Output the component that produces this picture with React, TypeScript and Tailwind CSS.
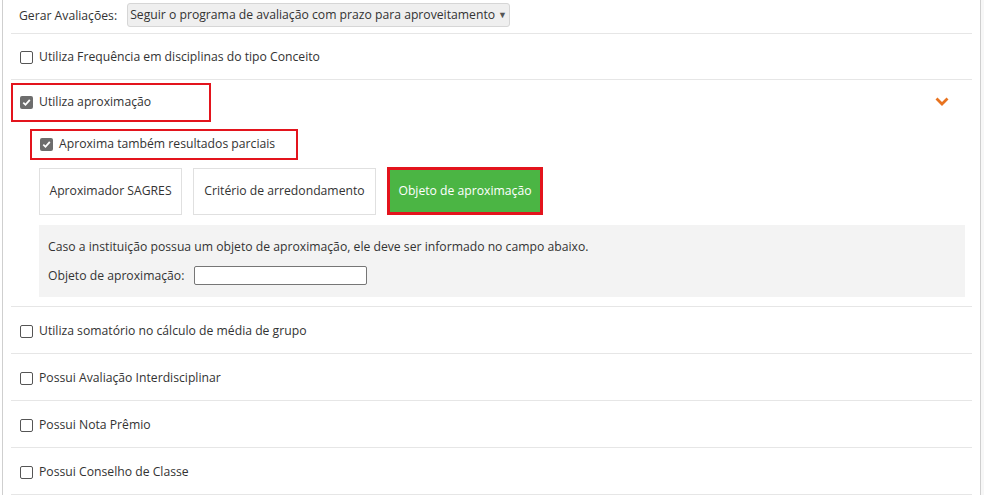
import React from "react";

function Box({ checked }: { checked?: boolean }) {
  if (checked) {
    return (
      <span className="inline-flex w-[13px] h-[13px] rounded-[2px] bg-[#6d6d6d] items-center justify-center shrink-0">
        <svg width="9" height="9" viewBox="0 0 9 9">
          <path d="M1.3 4.6 L3.5 6.8 L7.8 1.9" fill="none" stroke="#fff" strokeWidth="1.8" />
        </svg>
      </span>
    );
  }
  return <span className="inline-block w-[13px] h-[13px] rounded-[2px] border border-[#555] bg-white shrink-0" />;
}

function Row({ label }: { label: string }) {
  return (
    <div className="h-[47px] border-b border-[#e6e6e6] flex items-center pl-[9px] gap-[6px] pt-[2px]">
      <Box />
      <span>{label}</span>
    </div>
  );
}

export default function App() {
  return (
    <div
      className="w-[984px] h-[495px] bg-white overflow-hidden flex text-[12.2px] text-[#333]"
      style={{ fontFamily: '"Open Sans", "Liberation Sans", Arial, sans-serif' }}
    >
      <div className="w-[2px] shrink-0" />
      <div className="w-[979px] shrink-0 border-l border-r border-[#cfcfcf] px-[8px]">
        <div className="h-[34px] border-b border-[#e6e6e6] flex items-start pt-[3px] pl-[8px]">
          <span className="mt-[4px]">Gerar Avaliações:</span>
          <div className="ml-[10px] w-[383px] h-[24px] bg-[#efefef] border border-[#d6d6d6] rounded-[3px] flex items-center pl-[2px] gap-[3px] overflow-hidden whitespace-nowrap">
            <span>Seguir o programa de avaliação com prazo para aproveitamento</span>
            <span className="text-[9px] text-[#555]">▼</span>
          </div>
        </div>
        <div className="h-[46px] border-b border-[#e6e6e6] flex items-center pl-[9px] gap-[6px] pt-[2px]">
          <Box />
          <span>Utiliza Frequência em disciplinas do tipo Conceito</span>
        </div>
        <div className="h-[227px] border-b border-[#e6e6e6] flex flex-col pt-[3px]">
          <div className="flex items-center justify-between">
            <div className="w-[200px] h-[39px] border-2 border-[#e3141d] flex items-center pl-[7px] gap-[6px]">
              <Box checked />
              <span>Utiliza aproximação</span>
            </div>
            <svg width="14" height="9" viewBox="0 0 14 9" className="mr-[23px] mt-[-2px]">
              <path d="M1.5 1.5 L7 7 L12.5 1.5" fill="none" stroke="#e8731f" strokeWidth="2.8" />
            </svg>
          </div>
          <div className="mt-[7px] ml-[19px] w-[268px] h-[31px] border-2 border-[#e3141d] flex items-center pl-[8px] gap-[6px]">
            <Box checked />
            <span>Aproxima também resultados parciais</span>
          </div>
          <div className="mt-[8px] ml-[28px] flex gap-[11px]">
            <div className="h-[47px] w-[143px] border border-[#e0e0e0] flex items-center justify-center">
              Aproximador SAGRES
            </div>
            <div className="h-[47px] w-[183px] border border-[#e0e0e0] flex items-center justify-center">
              Critério de arredondamento
            </div>
            <div className="h-[48px] w-[156px] border-[3px] border-[#e3141d] bg-[#4bb544] text-white flex items-center justify-center -mt-[1px]">
              Objeto de aproximação
            </div>
          </div>
          <div className="mt-[10px] ml-[28px] w-[926px] h-[72px] bg-[#f3f3f3] pl-[9px] pt-[13px]">
            <div>Caso a instituição possua um objeto de aproximação, ele deve ser informado no campo abaixo.</div>
            <div className="flex items-center mt-[10px]">
              <span>Objeto de aproximação:</span>
              <span className="ml-[10px] w-[173px] h-[19px] bg-white border border-[#767676] rounded-[2px]" />
            </div>
          </div>
        </div>
        <Row label="Utiliza somatório no cálculo de média de grupo" />
        <Row label="Possui Avaliação Interdisciplinar" />
        <Row label="Possui Nota Prêmio" />
        <Row label="Possui Conselho de Classe" />
      </div>
      <div className="flex-1 bg-[#f7f7f7]" />
    </div>
  );
}
